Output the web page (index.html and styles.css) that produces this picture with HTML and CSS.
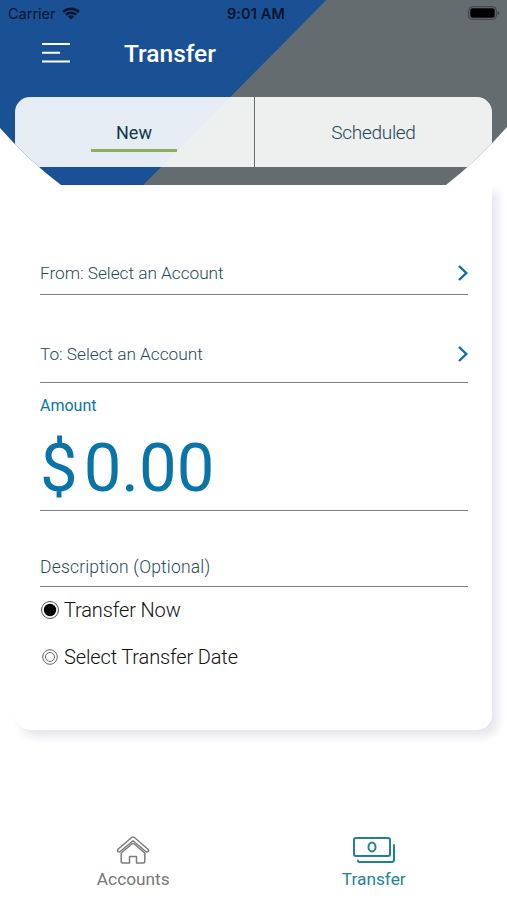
FILE: index.html
```html
<!DOCTYPE html>
<html lang="en">
<head>
<meta charset="utf-8">
<title>Transfer</title>
<link rel="stylesheet" href="styles.css">
</head>
<body>
<header class="header">
  <div class="status">
    <div class="carrier"><span>Carrier</span>
      <svg width="18" height="13" viewBox="0 0 18 13" fill="none" stroke="#04142c" stroke-width="2.5"><path d="M1.2 5a11 11 0 0 1 15.6 0M4 7.8a7.1 7.1 0 0 1 10 0"/><path d="M9 12.500 6 9.600a4.300 4.300 0 0 1 6 0z" fill="#04142c" stroke="none"/></svg>
    </div>
    <span class="time">9:01 AM</span>
    <svg class="battery" width="32" height="14" viewBox="0 0 32 14"><rect x=".7" y=".7" width="27.6" height="12.6" rx="3.6" fill="none" stroke="#3c4144"/><rect x="2.3" y="2.3" width="24.4" height="9.4" rx="2" fill="#000"/><path d="M29.6 5v4q1.6-.6 1.6-2t-1.6-2" fill="#3c4144"/></svg>
  </div>
  <div class="titlebar">
    <svg width="28" height="20" viewBox="0 0 28 20" stroke="#fff" stroke-width="2"><path d="M0 1h28M0 9.800h18M0 18.400h28"/></svg>
    <h1>Transfer</h1>
  </div>
  <nav class="tabs">
    <div class="tab active"><span>New</span></div>
    <div class="tab"><span>Scheduled</span></div>
  </nav>
</header>
<main class="card">
  <div class="field from"><span>From: Select an Account</span><svg width="10" height="16" viewBox="0 0 10 16"><path d="M1 1l7.300 7L1 15"/></svg></div>
  <div class="field to"><span>To: Select an Account</span><svg width="10" height="16" viewBox="0 0 10 16"><path d="M1 1l7.300 7L1 15"/></svg></div>
  <div class="amount"><label>Amount</label><div class="value"><span class="currency">$</span><span class="digits">0.00</span></div></div>
  <div class="field desc"><span>Description (Optional)</span></div>
  <div class="option"><svg width="20" height="20" viewBox="0 0 20 20" fill="none"><circle cx="10" cy="10" r="8.500" stroke="#555"/><circle cx="10" cy="10" r="6.200" fill="#000"/></svg><span>Transfer Now</span></div>
  <div class="option"><svg width="20" height="20" viewBox="0 0 20 20" fill="none" stroke="#666"><circle cx="10" cy="10" r="7.300"/><circle cx="10" cy="10" r="4.500"/></svg><span>Select Transfer Date</span></div>
</main>
<footer class="bottom">
  <div class="item"><svg width="34" height="28" viewBox="0 0 34 28" fill="none" stroke="#7c7c7c" stroke-width="1.500" stroke-linejoin="round"><path d="M2 13.300 15.600 1.500q1.400-1.100 2.800 0L32 13.300q1 1.100 0 2.200-1.100 1-2.300 0L17 4.700 4.300 15.500q-1.200 1-2.300 0-1-1.100 0-2.200z"/><path d="M5.200 17 15.800 8q1.200-1 2.400 0L28.800 17V25.500q0 1.500-1.500 1.500H20.500V20.500H13.500V27H6.700q-1.500 0-1.500-1.500z"/></svg><span>Accounts</span></div>
  <div class="item current"><svg width="42" height="28" viewBox="0 0 42 28" fill="none" stroke="#1f7f9f" stroke-width="2" stroke-linecap="round"><rect x="1" y="2" width="36" height="18" rx="2"/><ellipse cx="19" cy="11" rx="3.500" ry="4.600"/><path d="M5 24.500q0 1.500 1.500 1.500H38.500q2.500 0 2.500-2.500V9"/></svg><span>Transfer</span></div>
</footer>
</body>
</html>
```
FILE: styles.css
```css
* { box-sizing: border-box; }
body { margin: 0; width: 507px; height: 900px; overflow: hidden; background: #fff; font-family: Roboto, "Liberation Sans", sans-serif; display: flex; flex-direction: column; }
svg { display: block; flex: none; }
span, label, h1 { white-space: nowrap; }
.header {
  height: 185px; flex: none; padding: 0 15px;
  background: linear-gradient(134.700deg, #1a5195 0 231.500px, #656c70 232.500px);
  clip-path: path("M0 0H507V127Q478 160 446 185H61Q29 161 0 128Z");
}
.status { height: 28px; margin: 0 -8px 0 -7px; display: grid; grid-template-columns: 1fr auto 1fr; align-items: center; font: 14.500px/28px Inter, sans-serif; color: #04142c; }
.carrier { display: flex; gap: 7px; }
.carrier svg { margin-top: 7px; margin-left: -1px; }
.time { font-weight: 600; letter-spacing: .15px; position: relative; left: 2px; }
.battery { justify-self: end; margin-top: -2px; }
.titlebar { display: flex; align-items: center; height: 69px; padding: 0 0 20px 27px; gap: 54px; color: #fff; }
h1 { margin: 2px 0 0; font-size: 24.500px; font-weight: 500; line-height: 30px; }
.tabs { display: grid; grid-template-columns: 239px 1fr; gap: 1px; width: 477px; height: 70px; border-radius: 15px 15px 0 0; overflow: hidden; }
.tab { background: rgba(255,255,255,.89); display: flex; justify-content: center; font-size: 19px; font-weight: 300; letter-spacing: -.3px; line-height: 22px; padding-top: 25px; color: #234657; }
.active { font-weight: 400; font-size: 18px; letter-spacing: 0; color: #0e3948; padding-right: 1px; }
.active span { width: 86px; height: 30px; text-align: center; border-bottom: 3px solid #8eb050; }
.card { height: 545px; flex: none; margin: 0 15px; padding: 66px 24px 0 25px; border-radius: 0 0 15px 15px; background: #fff; box-shadow: 6px 7px 9px rgba(30,30,110,.11); }
.field { display: flex; align-items: center; justify-content: space-between; border-bottom: 1px solid #808080; color: #234b5d; font-size: 17.300px; font-weight: 300; letter-spacing: -.04px; }
.field svg { fill: none; stroke: #0870a5; stroke-width: 2.400; }
.from { height: 44px; }
.to { height: 88px; padding-top: 30px; }
.amount { height: 128px; padding-top: 13px; border-bottom: 1px solid #808080; color: #0874a8; display: flex; flex-direction: column; }
.amount label { font-size: 16px; line-height: 20px; }
.value { display: flex; font-size: 67px; line-height: 80px; margin-top: 12px; gap: 6px; }
.desc { height: 76px; padding-top: 36px; font-size: 17.500px; letter-spacing: .18px; }
.option { display: flex; align-items: center; gap: 4px; height: 46.500px; color: #111; font-size: 20px; font-weight: 300; letter-spacing: -.14px; }
.bottom { display: grid; grid-template-columns: 1fr 1fr; padding: 106px 13px 0; }
.item { display: flex; flex-direction: column; align-items: center; gap: 3px; font-size: 17.300px; line-height: 24px; color: #777; }
.current { color: #2482a1; }
```
